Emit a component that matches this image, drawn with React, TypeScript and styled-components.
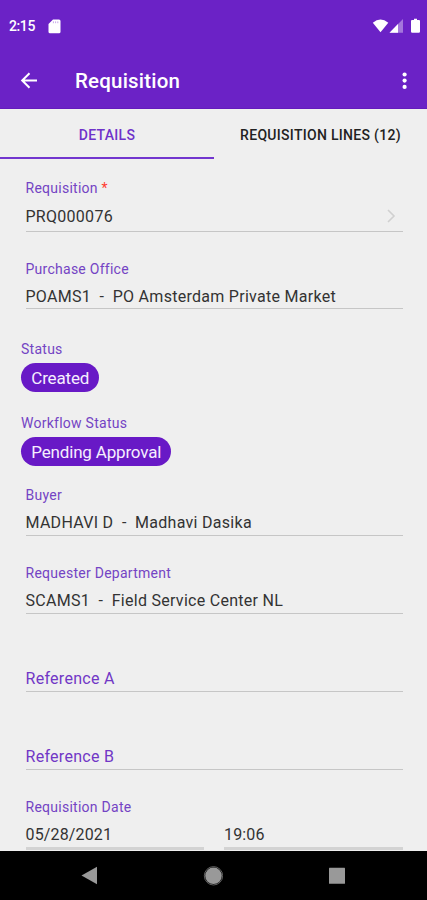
import React from 'react';
import styled, { createGlobalStyle } from 'styled-components';

const purple = '#6b22c6';

const GlobalStyle = createGlobalStyle`
  * { box-sizing: border-box; }
  body { margin: 0; background: #efefef; font-family: Roboto, sans-serif; }
`;

const Screen = styled.div`
  width: 427px;
  height: 900px;
  display: flex;
  flex-direction: column;
  overflow: hidden;
  background: #efefef;
`;

const Header = styled.header`
  height: 109px;
  flex: none;
  background: ${purple};
  color: #fff;
  border-bottom: 1px solid #641bbc;
`;

const StatusBar = styled.div`
  height: 53px;
  padding: 0 7px 1px 9px;
  display: flex;
  align-items: center;
  justify-content: space-between;
`;

const StatusGroup = styled.div`
  display: flex;
  align-items: center;
`;

const Clock = styled.span`
  width: 38.5px;
  font-size: 14px;
  font-weight: 500;
  line-height: 20px;
  letter-spacing: -0.4px;
`;

const Toolbar = styled.div`
  height: 55px;
  padding: 0 18px 0 20px;
  display: flex;
  align-items: center;
`;

const IconButton = styled.button`
  display: flex;
  padding: 0;
  border: 0;
  background: none;
  color: inherit;
`;

const Title = styled.h1`
  flex: 1;
  margin: 1px 0 0 37px;
  font-size: 20.5px;
  font-weight: 500;
  line-height: 28px;
  letter-spacing: 0.2px;
`;

const Tabs = styled.nav`
  height: 50px;
  flex: none;
  display: grid;
  grid-template-columns: 214px 213px;
`;

const Tab = styled.button<{ $active?: boolean }>`
  padding: 4px 0 0;
  border: 0;
  border-bottom: 2px solid ${(p) => (p.$active ? '#7236cf' : 'transparent')};
  background: none;
  font: 500 14px/20px Roboto, sans-serif;
  letter-spacing: 0.3px;
  color: ${(p) => (p.$active ? '#6f32ca' : '#222')};
  white-space: nowrap;
`;

const Form = styled.main`
  flex: 1;
  min-height: 0;
  overflow: hidden;
  padding: 20px 24px 0 25.5px;
`;

const Field = styled.section<{ $height: number }>`
  height: ${(p) => p.$height}px;
`;

const Label = styled.div<{ $raised?: boolean }>`
  height: 19px;
  padding-top: ${(p) => (p.$raised ? 0 : 1)}px;
  font-size: 14px;
  line-height: 19px;
  letter-spacing: 0.26px;
  color: #7444c4;
`;

const Required = styled.span`
  color: #ff3b30;
`;

const Value = styled.div<{ $height: number; $raised?: boolean }>`
  height: ${(p) => p.$height}px;
  padding-top: ${(p) => (p.$raised ? 7 : 8)}px;
  border-bottom: 1.5px solid #c6c6c6;
  display: flex;
  justify-content: space-between;
  font-size: 16px;
  line-height: 21px;
  letter-spacing: 0.28px;
  color: #333;
  white-space: pre;
`;

const Placeholder = styled(Value)`
  padding-top: 1px;
  color: #7137c6;
`;

const ChipField = styled(Field)`
  margin-left: -4.5px;
`;

const Chip = styled.span`
  display: block;
  width: fit-content;
  height: 29px;
  margin-top: 5px;
  padding: 0 10.3px;
  border-radius: 15px;
  background: #6819c6;
  color: #f5eefe;
  font-size: 17px;
  line-height: 30px;
  letter-spacing: -0.18px;
`;

const DateRow = styled.div`
  display: grid;
  grid-template-columns: 178.5px 179px;
  column-gap: 20px;
`;

const DateValue = styled(Value)`
  border-bottom: 3px solid #d3d3d3;
  letter-spacing: 0.15px;
`;

const Chevron = styled.svg`
  margin-right: 4px;
`;

const NavBar = styled.footer`
  height: 49px;
  flex: none;
  background: #000;
  padding: 0 81px 0 80px;
  display: flex;
  align-items: center;
  justify-content: space-between;
`;

export default function App() {
  return (
    <>
      <GlobalStyle />
      <Screen>
        <Header>
          <StatusBar>
            <StatusGroup>
              <Clock>2:15</Clock>
              <svg width="13" height="15" viewBox="0 0 13 15">
                <path d="M5 .5h6Q12.5 .5 12.5 2v10.7q0 1.5-1.5 1.5H2Q.5 14.2.5 12.7V5.1Z" fill="#fff" />
                <path d="M5.4 2.4v1.8M7.6 2.4v1.8M9.8 2.4v1.8" stroke="#b993e2" strokeWidth=".8" />
              </svg>
            </StatusGroup>
            <svg width="48" height="16" viewBox="0 0 48 16">
              <path d="M.8 4.7Q8.5-1.8 16.3 4.7L8.5 14.2Z" fill="#fff" />
              <path d="M31 1v13.8H17.5Z" fill="#a477dc" />
              <path d="M26 6.1v8.7h-8.5Z" fill="#fff" />
              <path d="M40 2h2V.8h3V2h2q1 0 1 1v10.5q0 1.3-1.2 1.3h-6.5q-1.3 0-1.3-1.3V3q0-1 1-1Z" fill="#fff" />
            </svg>
          </StatusBar>
          <Toolbar>
            <IconButton aria-label="Back">
              <svg width="18" height="18" viewBox="0 0 18 18" fill="none" stroke="#fff" strokeWidth="2">
                <path d="M17 8.5H2.5M9.5 1.2 2.2 8.5l7.3 7.3" />
              </svg>
            </IconButton>
            <Title>Requisition</Title>
            <IconButton aria-label="More options">
              <svg width="8" height="18" viewBox="0 0 8 18" fill="#fff">
                <circle cx="3.6" cy="2.5" r="2.1" />
                <circle cx="3.6" cy="8.6" r="2.1" />
                <circle cx="3.6" cy="14.9" r="2.1" />
              </svg>
            </IconButton>
          </Toolbar>
        </Header>
        <Tabs>
          <Tab $active>DETAILS</Tab>
          <Tab>REQUISITION LINES (12)</Tab>
        </Tabs>
        <Form>
          <Field $height={80}>
            <Label $raised>Requisition <Required>*</Required></Label>
            <Value $height={34}>
              PRQ000076
              <Chevron width="16" height="20" viewBox="0 0 16 20" fill="none" stroke="#d0d0d0" strokeWidth="1.6">
                <path d="m5 4 6 6-6 6" />
              </Chevron>
            </Value>
          </Field>
          <Field $height={80}>
            <Label>Purchase Office</Label>
            <Value $height={31}>{'POAMS1  -  PO Amsterdam Private Market'}</Value>
          </Field>
          <ChipField $height={74}>
            <Label>Status</Label>
            <Chip>Created</Chip>
          </ChipField>
          <ChipField $height={72}>
            <Label>Workflow Status</Label>
            <Chip>Pending Approval</Chip>
          </ChipField>
          <Field $height={79}>
            <Label>Buyer</Label>
            <Value $height={32}>{'MADHAVI D  -  Madhavi Dasika'}</Value>
          </Field>
          <Field $height={103}>
            <Label $raised>Requester Department</Label>
            <Value $height={31} $raised>{'SCAMS1  -  Field Service Center NL'}</Value>
          </Field>
          <Field $height={78}>
            <Placeholder $height={25}>Reference A</Placeholder>
          </Field>
          <Field $height={53}>
            <Placeholder $height={25}>Reference B</Placeholder>
          </Field>
          <Label $raised>Requisition Date</Label>
          <DateRow>
            <DateValue $height={33} $raised>05/28/2021</DateValue>
            <DateValue $height={33} $raised>19:06</DateValue>
          </DateRow>
        </Form>
        <NavBar>
          <svg width="18" height="20" viewBox="0 0 18 20">
            <path d="M1.5 9.5 17 .8v17.5Z" fill="#999" />
          </svg>
          <svg width="20" height="20" viewBox="0 0 20 20">
            <circle cx="10.5" cy="9.8" r="9.2" fill="none" stroke="#777" strokeWidth=".8" />
            <circle cx="10.5" cy="9.8" r="8.3" fill="#999" />
          </svg>
          <svg width="18" height="18" viewBox="0 0 18 18">
            <rect x="1" y=".7" width="16" height="16" rx=".5" fill="#999" />
          </svg>
        </NavBar>
      </Screen>
    </>
  );
}
